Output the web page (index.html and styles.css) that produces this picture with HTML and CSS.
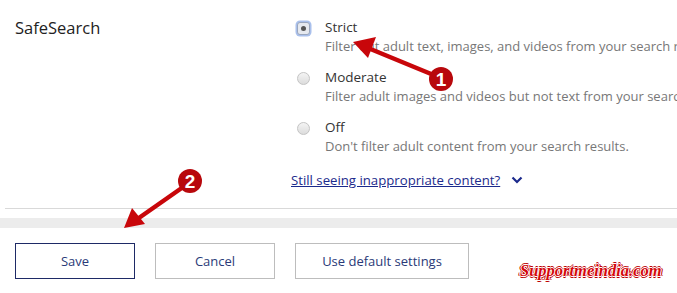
FILE: index.html
```html
<!DOCTYPE html>
<html lang="en">
<head>
  <meta charset="UTF-8">
  <title>SafeSearch</title>
  <link rel="stylesheet" href="styles.css">
</head>
<body>
  <div class="page">
    <!-- SafeSearch setting -->
    <div class="setting">
      <div class="setting-label">SafeSearch</div>
      <div class="options">
        <div class="option">
          <span class="radio checked"><span class="dot"></span></span>
          <div class="option-text">
            <div class="option-title">Strict</div>
            <div class="option-desc">Filter out adult text, images, and videos from your search results.</div>
          </div>
        </div>
        <div class="option">
          <span class="radio"></span>
          <div class="option-text">
            <div class="option-title">Moderate</div>
            <div class="option-desc">Filter adult images and videos but not text from your search results.</div>
          </div>
        </div>
        <div class="option">
          <span class="radio"></span>
          <div class="option-text">
            <div class="option-title">Off</div>
            <div class="option-desc">Don't filter adult content from your search results.</div>
          </div>
        </div>
        <div class="more">
          <a href="#" class="more-link">Still seeing inappropriate content?</a>
          <svg class="chevron" width="12" height="8" viewBox="0 0 12 8"><path d="M1.5 1.5 L6 6 L10.5 1.5" fill="none" stroke="#1b2a8c" stroke-width="2.2"/></svg>
        </div>
      </div>
    </div>

    <div class="divider"></div>
    <div class="band"></div>

    <div class="buttons">
      <button class="btn primary">Save</button>
      <button class="btn">Cancel</button>
      <button class="btn wide">Use default settings</button>
      <span class="watermark">Supportmeindia.com</span>
    </div>

    <!-- annotation arrows -->
    <svg class="marks" width="677" height="293" viewBox="0 0 677 293">
      <line x1="436" y1="76" x2="368" y2="48" stroke="#c8060a" stroke-width="4.5" stroke-linecap="round"/>
      <polygon points="353,42 376,37 368,58" fill="#c8060a"/>
      <circle cx="441" cy="79" r="12" fill="#b8080c"/>
      <text x="441" y="86" class="num">1</text>

      <line x1="186" y1="185" x2="136" y2="220" stroke="#c8060a" stroke-width="4.5" stroke-linecap="round"/>
      <polygon points="124,228 132,208 145,224" fill="#c8060a"/>
      <circle cx="190" cy="181" r="12" fill="#b8080c"/>
      <text x="190" y="188" class="num">2</text>
    </svg>
  </div>
</body>
</html>
```

FILE: styles.css
```css
body {
  margin: 0;
  background: #fff;
  font-family: "Open Sans", "Noto Sans", sans-serif;
  overflow: hidden;
}

.page {
  position: relative;
  width: 677px;
  height: 293px;
  overflow: hidden;
}

.setting {
  display: flex;
  padding: 17px 0 0 15px;
}

.setting-label {
  flex: none;
  width: 282px;
  font-size: 16.5px;
  color: #222;
  line-height: 22px;
}

.options {
  display: flex;
  flex-direction: column;
  gap: 11px;
  white-space: nowrap;
}

.option {
  display: flex;
  gap: 15px;
}

.radio {
  flex: none;
  width: 11px;
  height: 11px;
  margin-top: 5px;
  border-radius: 50%;
  border: 1px solid #c4c4c4;
  background: linear-gradient(#f4f4f4, #dcdcdc);
  display: flex;
  align-items: center;
  justify-content: center;
}

.radio.checked {
  border-color: #9aa6bd;
  background: #e6e9ef;
  box-shadow: 0 0 0 1.5px #a9c0ec;
  border-radius: 3px;
}

.dot {
  width: 5px;
  height: 5px;
  border-radius: 50%;
  background: #555;
}

.option-title {
  font-size: 13.5px;
  color: #333;
  line-height: 20px;
}

.option-desc {
  font-size: 13px;
  color: #777;
  line-height: 19px;
}

.more {
  display: flex;
  align-items: center;
  gap: 11px;
  margin: 3px 0 0 -6px;
}

.more-link {
  font-size: 13.2px;
  color: #1b2a8c;
  line-height: 20px;
}

.divider {
  height: 1px;
  background: #d9d9d9;
  margin: 18px 0 0 5px;
}

.band {
  height: 10px;
  background: #ececec;
  margin-top: 9px;
}

.buttons {
  display: flex;
  align-items: flex-start;
  gap: 20px;
  padding: 15px 0 0 15px;
}

.btn {
  width: 120px;
  height: 36px;
  background: #fff;
  border: 1px solid #bdbdbd;
  font-family: inherit;
  font-size: 13px;
  color: #2a3a78;
  padding: 0;
}

.btn.primary {
  border: 1.5px solid #1e2a66;
}

.btn.wide {
  width: 174px;
}

.watermark {
  margin: 17px 0 0 31px;
  font-family: "Liberation Serif", serif;
  font-style: italic;
  font-weight: bold;
  font-size: 16.5px;
  line-height: 22px;
  color: #d4080c;
  white-space: nowrap;
  text-shadow: 1px 0 0 #fff, -1px 0 0 #fff, 0 1px 0 #fff, 0 -1px 0 #fff,
    2px 0 0 #b00, -2px 0 0 #b00, 0 2px 0 #b00, 0 -2px 0 #b00;
}

.marks {
  position: absolute;
  left: 0;
  top: 0;
  pointer-events: none;
}

.num {
  font-family: "Liberation Sans", sans-serif;
  font-weight: bold;
  font-size: 19px;
  fill: #fff;
  text-anchor: middle;
}
```
